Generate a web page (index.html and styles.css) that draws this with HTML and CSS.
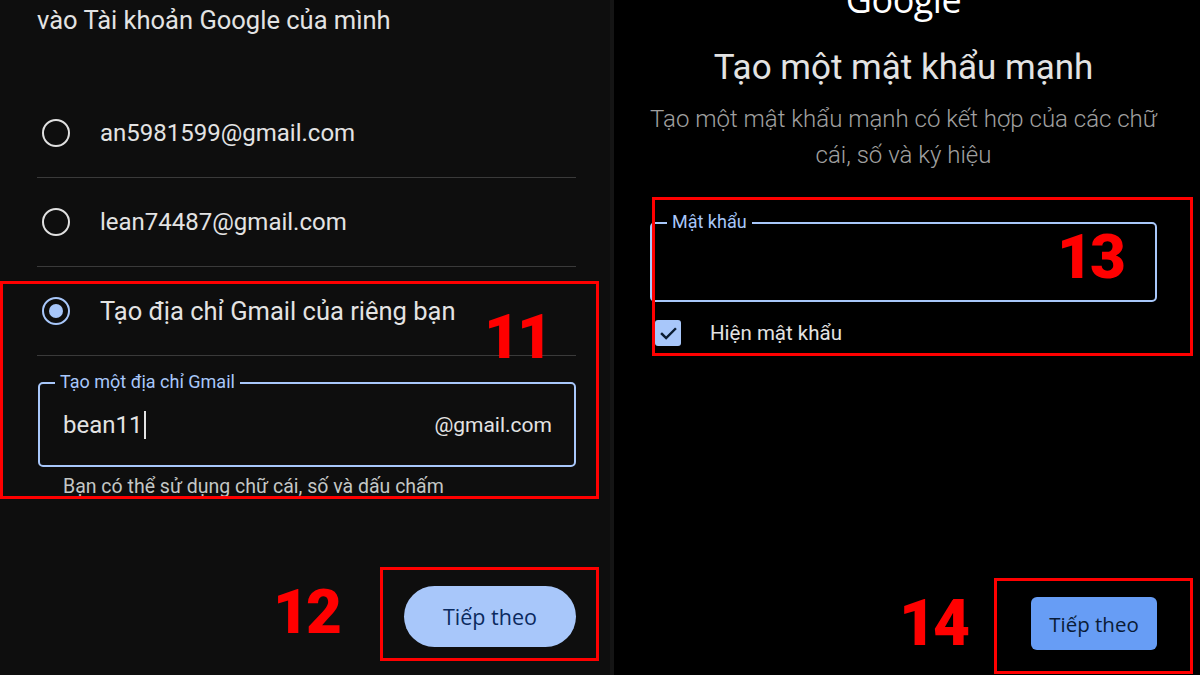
FILE: index.html
```html
<!DOCTYPE html>
<html lang="vi">
<head>
<meta charset="utf-8">
<title>Tạo tài khoản Gmail</title>
<link rel="stylesheet" href="styles.css">
</head>
<body>
<div class="page">
  <section class="left">
    <p class="lead">vào Tài khoản Google của mình</p>
    <ul class="options">
      <li class="opt"><span class="radio"></span><span class="opt-text">an5981599@gmail.com</span></li>
      <li class="opt"><span class="radio"></span><span class="opt-text">lean74487@gmail.com</span></li>
      <li class="opt selected"><span class="radio"><span class="dot"></span></span><span class="opt-text">Tạo địa chỉ Gmail của riêng bạn</span></li>
    </ul>
    <div class="field gmail">
      <span class="field-label">Tạo một địa chỉ Gmail</span>
      <span class="value">bean11<span class="caret"></span></span>
      <span class="suffix">@gmail.com</span>
    </div>
    <p class="helper">Bạn có thể sử dụng chữ cái, số và dấu chấm</p>
    <div class="actions"><button class="pill">Tiếp theo</button></div>
  </section>
  <div class="split"></div>
  <section class="right">
    <div class="logo">Google</div>
    <h1 class="title">Tạo một mật khẩu mạnh</h1>
    <p class="sub">Tạo một mật khẩu mạnh có kết hợp của các chữ<br>cái, số và ký hiệu</p>
    <div class="field pw">
      <span class="field-label">Mật khẩu</span>
    </div>
    <div class="check">
      <span class="box"><svg viewBox="0 0 24 24" width="21" height="21"><path d="M4.5 12.5l4.8 4.8L19.5 7" fill="none" stroke="#0b1d33" stroke-width="2.8" stroke-linecap="square"/></svg></span>
      <span class="check-text">Hiện mật khẩu</span>
    </div>
    <div class="actions"><button class="rect">Tiếp theo</button></div>
  </section>

  <div class="mark m1"></div>
  <div class="mark m2"></div>
  <div class="mark m3"></div>
  <div class="mark m4"></div>
  <span class="num n11">11</span>
  <span class="num n12">12</span>
  <span class="num n13">13</span>
  <span class="num n14">14</span>
</div>
</body>
</html>
```

FILE: styles.css
```css
* { box-sizing: border-box; }
html, body { margin: 0; padding: 0; background: #000; }
body { font-family: Roboto, "Noto Sans", sans-serif; color: #e3e3e3; }

.page {
  position: relative;
  width: 1200px;
  height: 675px;
  overflow: hidden;
  display: flex;
}

/* Left panel */
.left {
  width: 610px;
  flex: none;
  background: #0e0e0e;
  padding: 0 34px 0 37px;
  display: flex;
  flex-direction: column;
}
.lead {
  margin: 0;
  height: 89px;
  padding-top: 4px;
  font-size: 25.5px;
  line-height: 32px;
  color: #e3e3e3;
}
.options { list-style: none; margin: 0; padding: 0; }
.opt {
  height: 89px;
  border-bottom: 1px solid #3a3a3a;
  display: flex;
  align-items: center;
  gap: 30px;
  padding-left: 5px;
}
.radio {
  width: 28px;
  height: 28px;
  border: 2.5px solid #e0e0e0;
  border-radius: 50%;
  display: flex;
  align-items: center;
  justify-content: center;
  flex: none;
}
.selected .radio { border-color: #a8c7fa; }
.dot { width: 14px; height: 14px; border-radius: 50%; background: #a8c7fa; }
.opt-text { font-size: 24px; color: #e3e3e3; }
.selected .opt-text { font-size: 25.5px; }

.field {
  position: relative;
  border: 2px solid #a8c7fa;
  border-radius: 5px;
}
.field-label {
  position: absolute;
  top: -14px;
  left: 15px;
  padding: 0 5px;
  font-size: 18px;
  line-height: 24px;
  color: #a8c7fa;
}
.gmail {
  margin: 26px 0 0 1px;
  height: 85px;
  display: flex;
  align-items: center;
  justify-content: space-between;
  padding: 0 22px 0 23px;
}
.gmail .field-label { background: #0e0e0e; }
.value { font-size: 24px; color: #e3e3e3; display: flex; align-items: center; }
.caret { display: inline-block; width: 2px; height: 28px; background: #e3e3e3; margin-left: 1px; }
.suffix { font-size: 21px; color: #e3e3e3; }
.helper {
  margin: 9px 0 0 26px;
  font-size: 19.5px;
  line-height: 22px;
  color: #c4c7c5;
}
.actions { display: flex; justify-content: flex-end; }
.left .actions { margin-top: 88px; }
.pill {
  width: 172px;
  height: 61px;
  border: none;
  border-radius: 31px;
  background: #a8c7fa;
  color: #0b2a5e;
  font-family: "Open Sans", Roboto, sans-serif;
  font-size: 21.5px;
  font-weight: 500;
}

.split { width: 4px; flex: none; background: #151515; }

/* Right panel */
.right {
  flex: 1;
  background: #000;
  padding: 0 43px 0 36px;
  display: flex;
  flex-direction: column;
}
.logo {
  margin-top: -18px;
  height: 36px;
  font-family: "Open Sans", Roboto, sans-serif;
  font-size: 36px;
  line-height: 36px;
  font-weight: 500;
  text-align: center;
  letter-spacing: -0.5px;
  color: #fff;
}
.title {
  margin: 28px 0 0;
  font-size: 35px;
  line-height: 44px;
  font-weight: 400;
  text-align: center;
  color: #e3e3e3;
}
.sub {
  margin: 11px 0 0;
  font-size: 24px;
  line-height: 36px;
  font-weight: 300;
  text-align: center;
  color: #a0a0a0;
}
.pw { margin-top: 49px; height: 80px; }
.pw .field-label { background: #000; left: 15px; }
.check {
  margin-top: 18px;
  height: 26px;
  display: flex;
  align-items: center;
  gap: 29px;
  padding-left: 5px;
}
.box {
  width: 26px;
  height: 26px;
  border-radius: 3px;
  background: #a8c7fa;
  display: flex;
  align-items: center;
  justify-content: center;
}
.check-text { font-size: 20.5px; color: #e3e3e3; }
.right .actions { margin-top: 251px; }
.rect {
  width: 126px;
  height: 53px;
  border: none;
  border-radius: 6px;
  background: #679df5;
  color: #0a1b36;
  font-family: "Open Sans", Roboto, sans-serif;
  font-size: 20.5px;
  font-weight: 500;
}

/* Annotation overlays */
.mark { position: absolute; border: 3px solid #ff0000; }
.m1 { left: 0; top: 281px; width: 599px; height: 218px; }
.m2 { left: 380px; top: 567px; width: 219px; height: 94px; }
.m3 { left: 652px; top: 197px; width: 541px; height: 159px; }
.m4 { left: 994px; top: 578px; width: 199px; height: 96px; }
.num {
  position: absolute;
  font-family: Roboto, "Liberation Sans", sans-serif;
  font-weight: 900;
  font-size: 62px;
  line-height: 62px;
  color: #ff0000;
  letter-spacing: -3px;
}
.n11 { left: 484px; top: 306px; }
.n12 { left: 273px; top: 581px; }
.n13 { left: 1057px; top: 226px; }
.n14 { left: 899px; top: 593px; font-size: 64px; }
```
